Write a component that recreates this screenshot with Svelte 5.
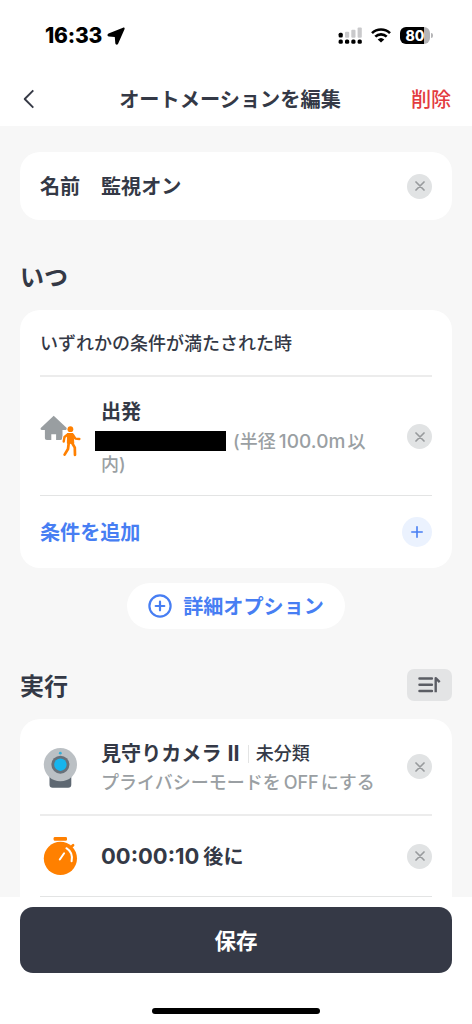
<script>
	let name = '監視オン';
</script>

{#snippet removeButton()}
	<button type="button" class="remove" aria-label="remove">
		<svg width="10" height="10" viewBox="0 0 10 10">
			<path d="M1 1 9 9M9 1 1 9" stroke="#989b9d" stroke-width="1.7" fill="none" stroke-linecap="round" />
		</svg>
	</button>
{/snippet}

<div class="screen">
	<header>
		<div class="status">
			<span class="time">16:33</span>
			<svg class="location" width="18" height="18" viewBox="0 0 18 18">
				<path d="M16 .7 1.5 6.6C0 7.300 .2 9.300 1.800 9.500l6 .6.5 6.200c.2 1.600 2.100 1.900 2.800.4L17.500 2.200c.5-1.200-.4-2-1.500-1.500Z" />
			</svg>
			<svg class="signal" width="25" height="17" viewBox="0 0 25 17">
				<g fill="#c9c9cb">
					<rect x="7" y="4.7" width="4.2" height="6" rx="1" />
					<rect x="13.3" y="2.8" width="4.2" height="7.9" rx="1" />
					<rect x="19.6" y="0.6" width="4.2" height="10.1" rx="1" />
				</g>
				<rect x="0.6" y="5.8" width="4.2" height="4.8" rx="1.5" />
				<rect x="0.6" y="12.4" width="4.2" height="4.4" rx="1.5" />
				<rect x="7" y="12.4" width="4.2" height="4.4" rx="1.5" />
				<rect x="13.3" y="12.4" width="4.2" height="4.4" rx="1.5" />
				<rect x="19.6" y="12.4" width="4.2" height="4.4" rx="1.5" />
			</svg>
			<svg class="wifi" width="20" height="15" viewBox="0 0 20 15">
				<path d="M1 5.2a12.8 12.8 0 0 1 18 0M4.3 8.7a8.1 8.1 0 0 1 11.4 0" fill="none" stroke="#000" stroke-width="2.6" />
				<path d="M10 14.5 6.7 11.6a4.8 4.8 0 0 1 6.6 0Z" />
			</svg>
			<div class="battery"><span>80</span></div>
			<i class="battery-tip"></i>
		</div>
		<nav>
			<button type="button" class="back" aria-label="back">
				<svg width="12" height="20" viewBox="0 0 12 20">
					<path d="M10.3 1.3 1.7 10l8.6 8.7" fill="none" stroke="#363a46" stroke-width="1.9" stroke-linejoin="round" />
				</svg>
			</button>
			<h1>オートメーションを編集</h1>
			<button type="button" class="delete">削除</button>
		</nav>
	</header>

	<main>
		<section class="card name-card">
			<span class="label">名前</span>
			<span class="value">{name}</span>
			{@render removeButton()}
		</section>

		<div class="heading"><h2>いつ</h2></div>
		<section class="card">
			<div class="row rule">いずれかの条件が満たされた時</div>
			<div class="row depart">
				<svg class="icon" width="41" height="42" viewBox="0 0 41 42">
					<path
						d="M13.7.8 1 12.8c-1 1.1-.4 2.3 1 2.3h2.9v8c0 1.3.7 2 2 2h4.4v-5.8h4.8v5.8h4.5c1.2 0 1.9-.7 1.9-2v-8h3c1.5 0 2-1.2 1-2.3Z"
						fill="#999ea1"
					/>
					<g fill="none" stroke="#fff" stroke-width="5" stroke-linecap="round" stroke-linejoin="round">
						<path d="M30.2 20.3 25 22.2l-1.2 4.6M33 20.7l2.2 3.1 4.3.4" />
					</g>
					<circle cx="30.4" cy="14.2" r="3.8" fill="#fff" />
					<circle cx="30.4" cy="14.2" r="2.9" fill="#ff8000" />
					<path d="M27.5 18.5h5.5l.8 9.8h-6.4Z" fill="#ff8000" stroke="#ff8000" stroke-linejoin="round" />
					<g fill="none" stroke="#ff8000" stroke-width="2.4" stroke-linecap="round" stroke-linejoin="round">
						<path d="M28 19.2 24.5 22l-.8 4.5M33 20l2.4 3.6 4 .4" />
						<path d="M28.8 27.5 28 34l-3.4 5.6M32 27.8l2.8 4.8.2 7.3" stroke-width="2.7" />
					</g>
				</svg>
				<div class="info">
					<strong>出発</strong>
					<p><i class="redacted"></i><span class="radius">(半径<b class="num">100.0m</b>以</span><br />内)</p>
				</div>
				{@render removeButton()}
			</div>
			<div class="row add">
				<span>条件を追加</span>
				<button type="button" class="plus" aria-label="add">
					<svg width="12" height="12" viewBox="0 0 12 12">
						<path d="M6 .8v10.4M.8 6h10.4" stroke="#477ef3" stroke-width="1.6" stroke-linecap="round" />
					</svg>
				</button>
			</div>
		</section>

		<button type="button" class="options">
			<svg width="24" height="24" viewBox="0 0 24 24">
				<circle cx="12" cy="12" r="10.6" fill="none" stroke="#477ef3" stroke-width="2.2" />
				<path d="M12 7.7v8.6M7.7 12h8.6" stroke="#477ef3" stroke-width="2.2" stroke-linecap="round" />
			</svg>
			<span>詳細オプション</span>
		</button>

		<div class="heading">
			<h2>実行</h2>
			<button type="button" class="sort" aria-label="sort">
				<svg width="23" height="18" viewBox="0 0 23 18">
					<path d="M1.5 2.6h12.4M1.5 8.8h12.4M1.5 15h12.4" stroke="#5b5d64" stroke-width="2.5" stroke-linecap="round" />
					<path d="M17.7 16.2V2.2l4 3.9" fill="none" stroke="#5b5d64" stroke-width="2.4" stroke-linejoin="round" />
				</svg>
			</button>
		</div>
		<section class="card actions">
			<div class="row camera">
				<svg class="icon" width="41" height="42" viewBox="0 0 41 42">
					<path d="M9.5 29.5h21.8v8a3.2 3.2 0 0 1-3.2 3.2H12.7a3.2 3.2 0 0 1-3.2-3.2Z" fill="#5e6872" />
					<circle cx="20.4" cy="17.7" r="16.6" fill="#bbc0c4" />
					<circle cx="20.4" cy="17.7" r="9" fill="#68717a" />
					<circle cx="20.4" cy="17.7" r="6.2" fill="#17b5ee" />
					<circle cx="20.3" cy="6.2" r="1.4" fill="#31afd9" />
				</svg>
				<div class="info">
					<div class="title"><strong>見守りカメラ<span class="roman">II</span></strong><span class="room">未分類</span></div>
					<p>プライバシーモードを<b class="off">OFF</b>にする</p>
				</div>
				{@render removeButton()}
			</div>
			<div class="row timer">
				<svg class="icon" width="41" height="42" viewBox="0 0 41 42">
					<rect x="13.6" y="1" width="13.4" height="3.8" rx="1.3" fill="#ff8000" />
					<path d="m29.5 12.5 3.6-3.3" stroke="#ff8000" stroke-width="2.6" stroke-linecap="round" />
					<circle cx="20.4" cy="22.4" r="16.6" fill="#ff8000" />
					<path d="m19.8 23.5 4.3-6.2M26.4 12.2c4.6 2.9 6.4 7.5 5.2 13" fill="none" stroke="#fff" stroke-width="2" stroke-linecap="round" />
				</svg>
				<div class="info">
					<strong><span class="clock">00:00:10</span>後に</strong>
				</div>
				{@render removeButton()}
			</div>
		</section>
	</main>

	<footer>
		<button type="button" class="save">保存</button>
		<i class="home-bar"></i>
	</footer>
</div>

<style>
	:global(body) {
		background: #fff;
	}

	.screen {
		display: flex;
		flex-direction: column;
		width: 472px;
		height: 1024px;
		overflow: hidden;
		color: #343946;
		font-family: Inter, 'Noto Sans CJK JP', sans-serif;
		font-size: 20.1px;
		line-height: 1;
	}

	button {
		display: flex;
		align-items: center;
		justify-content: center;
		padding: 0;
		border: 0;
		background: none;
		color: inherit;
		font: inherit;
	}

	svg {
		display: block;
		flex: none;
	}

	h1,
	h2,
	p {
		margin: 0;
	}

	header {
		flex: none;
		height: 126px;
		background: #fff;
	}

	.status {
		display: flex;
		align-items: center;
		height: 71px;
		padding-left: 45px;
		color: #000;
	}

	.time {
		width: 62px;
		font-size: 21px;
		font-weight: 800;
		letter-spacing: -0.2px;
	}

	.signal {
		margin-left: 213px;
	}

	.wifi {
		margin-left: 8px;
	}

	.battery {
		width: 30px;
		height: 17px;
		margin-left: 9px;
		border-radius: 6px;
		background: linear-gradient(90deg, #000 80%, #b5b5b7 80%);
		color: #fff;
		font-size: 14px;
		font-weight: 800;
		line-height: 17px;
		text-align: center;
	}

	.battery-tip {
		width: 2px;
		height: 5px;
		margin-left: 1px;
		border-radius: 0 3px 3px 0;
		background: #b5b5b7;
	}

	nav {
		display: grid;
		grid-template-columns: 58px 1fr 70px;
		align-items: center;
		height: 55px;
	}

	.back {
		justify-content: flex-start;
		padding-left: 23px;
	}

	h1 {
		padding-top: 3px;
		font-size: 20.2px;
		font-weight: 700;
		text-align: center;
		white-space: nowrap;
	}

	.delete {
		justify-content: flex-start;
		padding: 3px 0 0 9px;
		color: #e33b40;
		font-weight: 500;
	}

	main {
		flex: none;
		height: 745px;
		padding: 26px 20px 0;
		overflow: hidden;
		background: #f7f7f7;
	}

	.card {
		padding: 0 20px;
		border-radius: 20px;
		background: #fff;
	}

	.name-card {
		display: flex;
		align-items: center;
		height: 68px;
		font-weight: 700;
	}

	.label {
		width: 61px;
	}

	.label,
	.value {
		padding-top: 2px;
	}

	.remove {
		flex: none;
		width: 25px;
		height: 25px;
		margin-left: auto;
		border-radius: 50%;
		background: #e1e3e4;
	}

	.heading {
		display: flex;
		align-items: center;
		justify-content: space-between;
		height: 68px;
		padding-top: 22px;
	}

	h2 {
		padding-top: 3px;
		font-size: 24px;
		font-weight: 700;
	}

	.row {
		display: flex;
		align-items: center;
		border-bottom: 1px solid #e3e4e4;
	}

	.rule {
		height: 63px;
		padding-top: 2px;
		border-bottom: 2px solid #ececec;
		font-size: 18px;
		font-weight: 500;
	}

	.depart {
		height: 118px;
	}

	.depart .remove {
		margin-top: 1px;
	}

	.icon {
		margin-right: 20px;
	}

	strong {
		font-weight: 700;
	}

	.info {
		padding-top: 3px;
	}

	.info p {
		color: #9a9fa3;
		font-size: 18px;
		font-weight: 500;
		line-height: 23px;
		white-space: nowrap;
	}

	.depart .info {
		padding-top: 6px;
	}

	.depart p {
		margin-top: 7px;
	}

	.redacted {
		display: inline-block;
		width: 131px;
		height: 20px;
		margin: 0 7px 0 -6px;
		background: #000;
		vertical-align: -3px;
	}

	.num,
	.off {
		margin: 0 3px;
		font-weight: 500;
	}

	.num {
		margin-right: 2px;
		font-size: 19px;
		letter-spacing: 0.1px;
		line-height: 1;
	}

	.off {
		margin-right: 2px;
	}

	.add {
		justify-content: space-between;
		height: 72px;
		border: 0;
		color: #477ef3;
		font-weight: 700;
	}

	.add span,
	.options span {
		padding-top: 3px;
	}

	.plus {
		width: 30px;
		height: 30px;
		border-radius: 50%;
		background: #ebf2fe;
	}

	.options {
		gap: 11px;
		width: 218px;
		height: 46px;
		margin: 15px auto 0;
		border-radius: 23px;
		background: #fff;
		color: #477ef3;
		font-weight: 700;
	}

	.sort {
		width: 45px;
		height: 32px;
		border-radius: 7px;
		background: #e3e4e5;
	}

	.actions {
		height: 220px;
	}

	.camera {
		height: 95px;
		border-bottom: 2px solid #ececec;
	}

	.camera .icon {
		margin-top: 2px;
	}

	.title {
		display: flex;
		align-items: center;
		white-space: nowrap;
	}

	.roman {
		margin-left: 6px;
		font-size: 21.5px;
		line-height: 1;
	}

	.room {
		margin-left: 8px;
		padding-left: 7px;
		border-left: 1px solid #e3e4e4;
		font-size: 18px;
		font-weight: 500;
	}

	.camera .info {
		padding-top: 4px;
	}

	.camera p {
		margin-top: 7px;
	}

	.timer {
		height: 80px;
	}

	.timer .icon {
		margin-top: 1px;
	}

	.timer .info {
		padding-top: 1px;
	}

	.clock {
		margin-right: 4px;
		font-size: 22px;
	}

	footer {
		flex: 1;
		padding: 10px 20px 0;
	}

	.save {
		width: 100%;
		height: 66px;
		padding-top: 4px;
		border-radius: 13px;
		background: #353946;
		color: #fff;
		font-size: 21.5px;
		font-weight: 700;
	}

	.home-bar {
		display: block;
		width: 168px;
		height: 6px;
		margin: 35px auto 0;
		border-radius: 3px;
		background: #000;
	}
</style>
